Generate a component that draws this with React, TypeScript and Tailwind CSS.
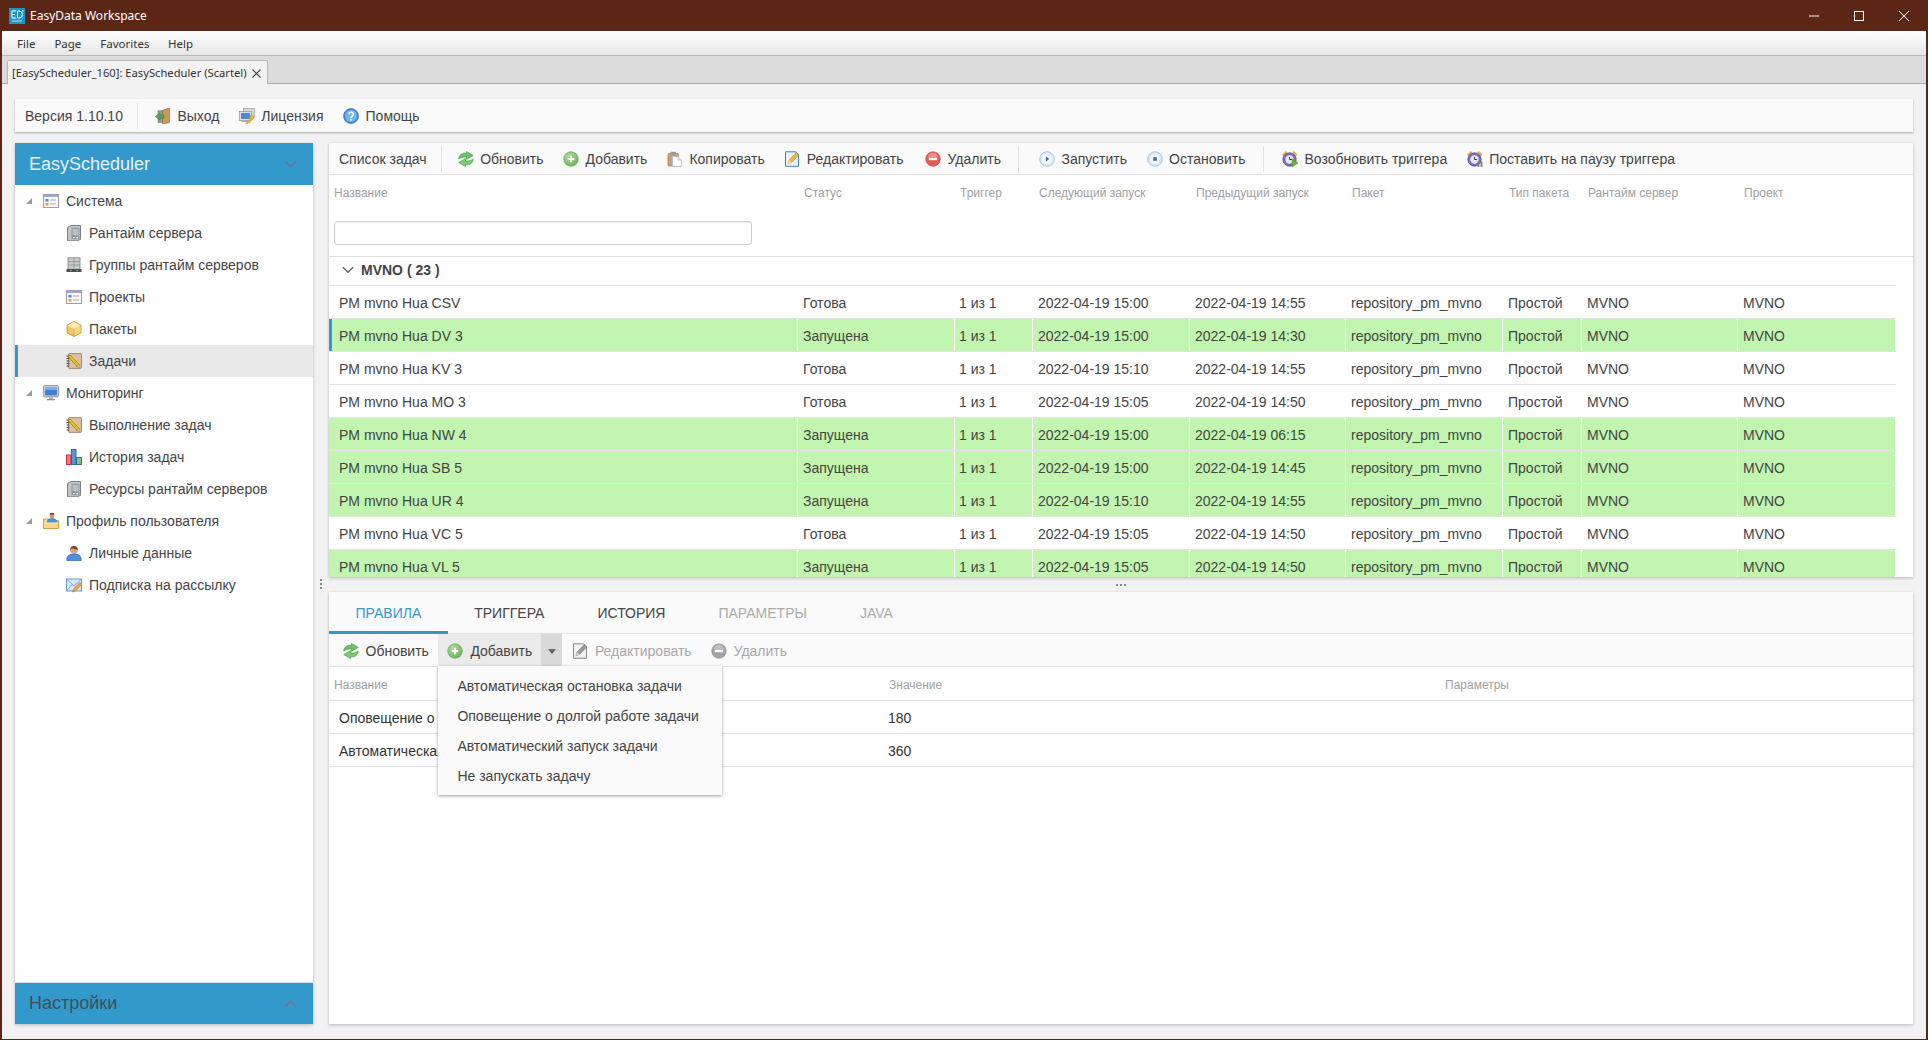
import type { ReactNode } from 'react';

function Svg({ size = 16, children }: { size?: number; children: ReactNode }) {
  return (
    <svg width={size} height={size} viewBox="0 0 16 16" className="shrink-0">
      {children}
    </svg>
  );
}

function Logo() {
  return (
    <svg width={16} height={16} viewBox="0 0 16 16" className="shrink-0">
      <rect width="16" height="16" fill="#1c97c4" />
      <path d="M3 3h4M3 3v7h4M3 6.500h3M8.500 3v7h1.500a3.500 3.500 0 0 0 0-7z" fill="none" stroke="#fff" strokeWidth="1" />
      <rect x="13" y="2" width="1.500" height="1.500" fill="#fff" />
      <rect x="3" y="12.500" width="10" height="1" fill="#bfe4f2" />
    </svg>
  );
}

const RefreshIcon = () => (
  <Svg>
    <path d="M.8 8C.8 4 4.500 1.500 8.500 2.300V.4l6.700 4-6.700 4V6C5.800 5.600 3.500 6.300.8 8z" fill="#6cc36a" stroke="#3a8f3f" strokeWidth=".6" />
    <path d="M15.200 8c0 4-3.700 6.500-7.700 5.700v1.900L.8 11.600l6.700-4V10c2.700.4 5-.3 7.700-2z" fill="#7ccc74" stroke="#3a8f3f" strokeWidth=".6" />
  </Svg>
);

const AddIcon = () => (
  <Svg>
    <defs>
      <radialGradient id="addg" cx=".4" cy=".35" r=".8">
        <stop offset="0" stopColor="#b6e29c" />
        <stop offset="1" stopColor="#5aa94c" />
      </radialGradient>
    </defs>
    <circle cx="8" cy="8" r="7.300" fill="url(#addg)" stroke="#6f9f68" strokeWidth=".6" />
    <path d="M8 4.800v6.400M4.800 8h6.400" stroke="#fff" strokeWidth="2" />
  </Svg>
);

const CopyIcon = () => (
  <Svg>
    <rect x="1" y="2.500" width="10.500" height="12.500" rx="1" fill="#c9a27c" stroke="#98774f" strokeWidth=".7" />
    <rect x="3.500" y=".8" width="5.500" height="3.200" rx=".6" fill="#9a9a9a" />
    <path d="M5.500 5.500H11l3.500 3.500v6.500h-9z" fill="#fbfbfb" stroke="#aeb4ba" strokeWidth=".7" />
    <path d="M11 5.500V9h3.500" fill="#e3e6e9" stroke="#aeb4ba" strokeWidth=".6" />
  </Svg>
);

const EditIcon = ({ gray = false }: { gray?: boolean }) => (
  <Svg>
    <path d="M1.500.8h10l3 2.500v12h-13z" fill={gray ? '#f1f1f1' : '#eaf3fb'} stroke={gray ? '#8a8a8a' : '#3d82c4'} strokeWidth="1" />
    <path d="M4 12.800l1-3.800L12 1.800l2.500 2.500-7 7.200z" fill={gray ? '#9c9c9c' : '#f0b13c'} stroke={gray ? '#6d6d6d' : '#b97d21'} strokeWidth=".5" />
    <path d="M4 12.800l1-3.800 2.500 2.500z" fill={gray ? '#d8d8d8' : '#f7dfb0'} />
  </Svg>
);

const DeleteIcon = ({ gray = false }: { gray?: boolean }) => (
  <Svg>
    <circle cx="8" cy="8" r="7.300" fill={gray ? '#a3a3a3' : '#e25b50'} stroke={gray ? '#909090' : '#c8473d'} strokeWidth=".6" />
    <path d="M3 6.500a5 5 0 0 1 10 0z" fill="#fff" fillOpacity=".3" />
    <rect x="3.800" y="6.800" width="8.400" height="2.400" fill="#fff" />
  </Svg>
);

const PlayIcon = () => (
  <Svg>
    <circle cx="8" cy="8" r="7.300" fill="#dbe7f6" stroke="#a3bfe0" strokeWidth=".9" />
    <circle cx="8" cy="8" r="4.800" fill="#f7fafd" />
    <path d="M6.800 5.300L10.300 8l-3.500 2.700z" fill="#3a6fb4" />
  </Svg>
);

const StopIcon = () => (
  <Svg>
    <circle cx="8" cy="8" r="7.300" fill="#dbe7f6" stroke="#a3bfe0" strokeWidth=".9" />
    <circle cx="8" cy="8" r="4.800" fill="#f7fafd" />
    <rect x="6.200" y="6.200" width="3.600" height="3.600" fill="#3a6fb4" />
  </Svg>
);

const ClockIcon = ({ pause = false }: { pause?: boolean }) => (
  <Svg>
    <path d="M.8 4.500L4.500.8M11 .8L14.700 4.500" stroke="#e0ae3a" strokeWidth="2.200" />
    <circle cx="7.500" cy="8.500" r="6.700" fill="#7d6fbe" stroke="#4f4490" strokeWidth=".7" />
    <circle cx="7.500" cy="8.500" r="4.200" fill="#e9e6f5" />
    <path d="M7.500 5.800v2.700H10" fill="none" stroke="#3a3a5a" strokeWidth="1" />
    {pause ? (
      <path d="M11.500 10.500v5.500M14.500 10.500v5.500" stroke="#7f7f7f" strokeWidth="1.800" />
    ) : (
      <path d="M10.200 7.800L16 12l-5.800 4z" fill="#68b82e" stroke="#4c8f1f" strokeWidth=".5" />
    )}
  </Svg>
);

const ExitIcon = () => (
  <Svg>
    <path d="M7.500 2.300L14.500 0v14.500l-7 1.500z" fill="#cd965a" stroke="#8f6230" strokeWidth=".6" />
    <rect x="3" y="2.800" width="4.500" height="11.700" fill="#9a9a8a" stroke="#6a6a5c" strokeWidth=".5" />
    <path d="M.5 8.500L5 4.800V7h4v3H5v2.200z" fill="#4fa84a" stroke="#2f7a2c" strokeWidth=".5" />
  </Svg>
);

const LicenseIcon = () => (
  <Svg>
    <rect x="4.500" y=".5" width="11" height="9" fill="#d4d6d9" stroke="#8e9298" strokeWidth=".6" />
    <rect x=".5" y="3.500" width="12" height="9" fill="#dde0e3" stroke="#80858c" strokeWidth=".6" />
    <rect x="2" y="5" width="9" height="6" fill="#4b89d6" />
    <rect x="2.500" y="12.500" width="8" height="1.500" fill="#a8abb0" />
    <circle cx="12.800" cy="9.500" r="2.200" fill="#edbb3c" stroke="#b98b1e" strokeWidth=".5" />
    <path d="M11.500 10.800L6.500 15.500h2.300l.8-.8.8.4 2.200-3.600z" fill="#edbb3c" stroke="#b98b1e" strokeWidth=".4" />
  </Svg>
);

const HelpIcon = () => (
  <Svg>
    <circle cx="8" cy="8" r="7.500" fill="#3f8fd6" stroke="#2a6fb3" strokeWidth=".6" />
    <circle cx="8" cy="8" r="5.900" fill="#76b4ea" />
    <path d="M5.900 6.300a2.200 2.200 0 1 1 3.300 1.900c-.8.500-1.200 1-1.200 1.900" fill="none" stroke="#fff" strokeWidth="1.500" />
    <rect x="7.200" y="11" width="1.600" height="1.600" fill="#fff" />
  </Svg>
);

const WindowIcon = () => (
  <Svg>
    <rect x=".5" y="1.500" width="15" height="13" fill="#f8f8fb" stroke="#9c9cb4" strokeWidth="1" />
    <rect x="1" y="2" width="14" height="2" fill="#a9a8c9" />
    <rect x="2.500" y="6" width="3" height="2.500" fill="#4b8ad0" />
    <rect x="2.500" y="10" width="3" height="2.500" fill="#e8a92f" />
    <path d="M7 7h6M7 11h6" stroke="#a8a8a8" strokeWidth="1" />
  </Svg>
);

const ServerIcon = () => (
  <Svg>
    <path d="M1.500 2.500L5 .5h9.500v14L11 15.800H1.500z" fill="#c2c5c8" stroke="#666a6e" strokeWidth=".8" />
    <rect x="5.500" y="2.800" width="8" height="11.500" fill="#989ca0" />
    <path d="M6.500 5h6M6.500 7h6M6.500 9h6" stroke="#ececec" strokeWidth=".9" />
    <rect x="7" y="12" width="1.500" height="1.300" fill="#fff" />
    <rect x="10.500" y="12" width="1.500" height="1.300" fill="#fff" />
  </Svg>
);

const ServerGroupIcon = () => (
  <Svg>
    <rect x="2" y=".8" width="12" height="11.500" fill="#c8cbce" stroke="#7d8185" strokeWidth=".8" />
    <path d="M8 1v11M2 4.500h12M2 8h12" stroke="#8e9296" strokeWidth=".8" />
    <rect x=".5" y="12" width="15" height="3" fill="#4c5054" />
    <rect x="4" y="13" width="1.500" height="1.200" fill="#51d651" />
    <rect x="10.500" y="13" width="1.500" height="1.200" fill="#51d651" />
  </Svg>
);

const PackageIcon = () => (
  <Svg>
    <path d="M8 .5l7 3.700v7.600l-7 3.700-7-3.700V4.200z" fill="#f4c561" stroke="#c48f2c" strokeWidth=".9" />
    <path d="M1.500 4.400L8 7.800l6.500-3.400L8 1z" fill="#fcebbb" />
    <path d="M8 7.800l6.500-3.400v7.100L8 15z" fill="#f7d68a" />
    <path d="M8 7.800V15" stroke="#d9a94a" strokeWidth=".8" />
  </Svg>
);

const TaskIcon = () => (
  <Svg>
    <rect x="2.500" y=".6" width="13" height="14.800" rx=".8" fill="#e0bf9f" stroke="#a08066" strokeWidth=".9" />
    <path d="M.5 3h3M.5 5.500h3M.5 8h3M.5 10.500h3M.5 13h3" stroke="#444" strokeWidth="1" />
    <path d="M3.500 1.800L13 11.300l-2 2L2.200 3.500z" fill="#f2c51d" stroke="#7b5c0c" strokeWidth=".6" />
    <path d="M13 11.300l1 3.200-3.200-1z" fill="#f1dcc2" stroke="#7b5c0c" strokeWidth=".4" />
  </Svg>
);

const MonitorIcon = () => (
  <Svg>
    <rect x=".6" y=".6" width="14.800" height="11.200" rx="1" fill="#dadcdf" stroke="#7f8489" strokeWidth=".9" />
    <rect x="2" y="2" width="12" height="8.500" fill="#3f80d4" />
    <path d="M2 2h12v3H2z" fill="#7db0ea" />
    <rect x="6" y="12" width="4" height="2" fill="#b4b7ba" />
    <rect x="4" y="14" width="8" height="1.300" fill="#8c9094" />
  </Svg>
);

const ChartIcon = () => (
  <Svg>
    <rect x=".5" y="6" width="4.500" height="9.500" fill="#f07a84" stroke="#b42c38" strokeWidth=".9" />
    <rect x="5.500" y=".5" width="4.500" height="15" fill="#5a92dc" stroke="#2a5ea8" strokeWidth=".9" />
    <rect x="10.500" y="8.500" width="5" height="7" fill="#7fc480" stroke="#2f5fa0" strokeWidth=".9" />
  </Svg>
);

const UserFolderIcon = () => (
  <Svg>
    <path d="M.5 6h5l1 1.500h9v8H.5z" fill="#f6d98b" stroke="#c8983a" strokeWidth=".9" />
    <circle cx="9" cy="2.800" r="2.400" fill="#d9986b" />
    <path d="M6.600 1.800a2.400 2.400 0 0 1 4.800 0z" fill="#7c4a28" />
    <path d="M4 9.500a5 4.300 0 0 1 10 0z" fill="#4f90dc" stroke="#2c68b0" strokeWidth=".5" />
    <path d="M1.500 10h13" stroke="#fff1c8" strokeWidth="1" />
  </Svg>
);

const UserIcon = () => (
  <Svg>
    <circle cx="8" cy="5" r="3.800" fill="#e0a47a" />
    <path d="M4.200 4.800a3.800 3.800 0 0 1 7.600 0C9.500 4.400 7 3.500 6 3.200c-.4.700-1 1.200-1.800 1.600z" fill="#7c4a28" />
    <path d="M.8 14.500c0-3.500 2.500-5.500 7.200-5.500s7.200 2 7.200 5.500v1H.8z" fill="#4f90dc" stroke="#2c68b0" strokeWidth=".7" />
  </Svg>
);

const MailIcon = () => (
  <Svg>
    <rect x=".5" y="2" width="15" height="12" fill="#d6e9fb" stroke="#5d93c9" strokeWidth=".9" />
    <path d="M1 2.500l7 6.500 7-6.500M1 13.500l5-6" fill="none" stroke="#6fa3d6" strokeWidth=".9" />
    <path d="M6.500 15l1-3 6.300-6.500 2 2-6.300 6.500z" fill="#f0a93c" stroke="#a8701c" strokeWidth=".5" />
  </Svg>
);

function Chevron({ up = false, className = '' }: { up?: boolean; className?: string }) {
  return (
    <svg width={13} height={8} viewBox="0 0 13 8" className={className}>
      <path d={up ? 'M1 7l5.500-5.500L12 7' : 'M1 1l5.500 5.500L12 1'} fill="none" stroke="currentColor" strokeWidth="1.600" />
    </svg>
  );
}

function Expander() {
  return (
    <svg width={8} height={8} viewBox="0 0 8 8" className="shrink-0">
      <path d="M7 1v6H1z" fill="#999" />
    </svg>
  );
}

function ToolButton({ icon, label, disabled = false, className = '' }: { icon: ReactNode; label: string; disabled?: boolean; className?: string }) {
  return (
    <div className={`flex items-center gap-[6.5px] pl-[10px] pr-[9.5px] ${disabled ? 'text-[#a8a8a8]' : 'text-[#444]'} ${className}`}>
      {icon}
      <span className="whitespace-nowrap pt-px">{label}</span>
    </div>
  );
}

function Separator({ className = '' }: { className?: string }) {
  return <div className={`h-[26px] w-px bg-[#e2e2e2] ${className}`} />;
}

type TreeNode = { label: string; icon: ReactNode; top?: boolean; selected?: boolean };

const tree: TreeNode[] = [
  { label: 'Система', icon: <WindowIcon />, top: true },
  { label: 'Рантайм сервера', icon: <ServerIcon /> },
  { label: 'Группы рантайм серверов', icon: <ServerGroupIcon /> },
  { label: 'Проекты', icon: <WindowIcon /> },
  { label: 'Пакеты', icon: <PackageIcon /> },
  { label: 'Задачи', icon: <TaskIcon />, selected: true },
  { label: 'Мониторинг', icon: <MonitorIcon />, top: true },
  { label: 'Выполнение задач', icon: <TaskIcon /> },
  { label: 'История задач', icon: <ChartIcon /> },
  { label: 'Ресурсы рантайм серверов', icon: <ServerIcon /> },
  { label: 'Профиль пользователя', icon: <UserFolderIcon />, top: true },
  { label: 'Личные данные', icon: <UserIcon /> },
  { label: 'Подписка на рассылку', icon: <MailIcon /> },
];

const columns = ['Название', 'Статус', 'Триггер', 'Следующий запуск', 'Предыдущий запуск', 'Пакет', 'Тип пакета', 'Рантайм сервер', 'Проект'];

const tasks = [
  { name: 'PM mvno Hua CSV', running: false, next: '15:00', prev: '14:55' },
  { name: 'PM mvno Hua DV 3', running: true, next: '15:00', prev: '14:30', selected: true },
  { name: 'PM mvno Hua KV 3', running: false, next: '15:10', prev: '14:55' },
  { name: 'PM mvno Hua MO 3', running: false, next: '15:05', prev: '14:50' },
  { name: 'PM mvno Hua NW 4', running: true, next: '15:00', prev: '06:15' },
  { name: 'PM mvno Hua SB 5', running: true, next: '15:00', prev: '14:45' },
  { name: 'PM mvno Hua UR 4', running: true, next: '15:10', prev: '14:55' },
  { name: 'PM mvno Hua VC 5', running: false, next: '15:05', prev: '14:50' },
  { name: 'PM mvno Hua VL 5', running: true, next: '15:05', prev: '14:50' },
];

const gridCols = 'grid grid-cols-[469px_157px_78px_157px_156px_157px_79px_156px_158px]';

function TaskRow({ task }: { task: (typeof tasks)[number] }) {
  const cells = [
    task.running ? 'Запущена' : 'Готова',
    '1 из 1',
    `2022-04-19 ${task.next}`,
    `2022-04-19 ${task.prev}`,
    'repository_pm_mvno',
    'Простой',
    'MVNO',
    'MVNO',
  ];
  return (
    <div className={`${gridCols} h-[33px] shrink-0 border-b border-[#e4e4e4] ${task.running ? 'bg-[#c1f5b0]' : 'bg-white'}`}>
      <div className={`flex items-center border-r border-white pt-[3px] ${task.selected ? 'border-l-[3px] border-l-[#3399cc] pl-[7px]' : 'pl-[10px]'}`}>
        {task.name}
      </div>
      {cells.map((value, i) => (
        <div key={i} className={`flex items-center border-r border-white pt-[3px] ${i === 1 ? 'pl-[4px]' : 'pl-[5px]'}`}>
          {value}
        </div>
      ))}
    </div>
  );
}

function Sidebar() {
  return (
    <aside className="flex w-[298px] shrink-0 flex-col bg-white shadow-[0_1px_3px_rgba(0,0,0,0.25)]">
      <div className="flex h-[42px] shrink-0 items-center justify-between bg-[#3399cc] pl-[14px] pr-[16px] text-[18px] text-[#e4f1f8]">
        EasyScheduler
        <Chevron className="text-[#587d94]" />
      </div>
      <div className="flex-1">
        {tree.map((node) => (
          <div
            key={node.label}
            className={`flex h-[32px] items-center ${node.selected ? 'border-l-[3px] border-[#3399cc] bg-[#e9e9e9]' : ''} ${node.top ? 'pl-[10px]' : node.selected ? 'pl-[48px]' : 'pl-[51px]'}`}
          >
            {node.top && (
              <span className="mr-[10px]">
                <Expander />
              </span>
            )}
            {node.icon}
            <span className="ml-[7px] whitespace-nowrap">{node.label}</span>
          </div>
        ))}
      </div>
      <div className="flex h-[42px] shrink-0 items-center justify-between border-t border-[#cfe3ee] bg-[#3399cc] pl-[14px] pr-[16px] text-[18px] text-[#3f4f57]">
        Настройки
        <Chevron up className="text-[#687b86]" />
      </div>
    </aside>
  );
}

function TasksPanel() {
  return (
    <section className="flex h-[434px] shrink-0 flex-col overflow-hidden bg-white shadow-[0_1px_3px_rgba(0,0,0,0.25)]">
      <div className="flex h-[32px] shrink-0 items-center border-b border-[#e2e2e2] bg-[#fafafa]">
        <span className="ml-[10px] mr-[14px] whitespace-nowrap pt-px text-[#444]">Список задач</span>
        <Separator className="mr-[6px]" />
        <ToolButton icon={<RefreshIcon />} label="Обновить" />
        <ToolButton icon={<AddIcon />} label="Добавить" />
        <ToolButton icon={<CopyIcon />} label="Копировать" />
        <ToolButton icon={<EditIcon />} label="Редактировать" />
        <ToolButton icon={<DeleteIcon />} label="Удалить" className="ml-[2px]" />
        <Separator className="ml-[8px] mr-[9.5px]" />
        <ToolButton icon={<PlayIcon />} label="Запустить" />
        <ToolButton icon={<StopIcon />} label="Остановить" />
        <Separator className="mx-[8px]" />
        <ToolButton icon={<ClockIcon />} label="Возобновить триггера" />
        <ToolButton icon={<ClockIcon pause />} label="Поставить на паузу триггера" />
      </div>
      <div className="h-[82px] shrink-0 border-b border-[#e2e2e2]">
        <div className={`${gridCols} h-[36px] text-[12px] text-[#a0a0a0]`}>
          {columns.map((column, i) => (
            <div key={column} className={`flex items-center ${i === 0 || i === 2 ? 'pl-[5px]' : 'pl-[6px]'}`}>
              {column}
            </div>
          ))}
        </div>
        <input className="ml-[5px] mt-[10px] h-[24px] w-[418px] rounded-[3px] border border-[#cfcfcf] shadow-[inset_0_1px_2px_rgba(0,0,0,0.08)] outline-none" />
      </div>
      <div className="w-[1567px]">
        <div className="flex h-[29px] items-center gap-[7px] border-b border-[#e4e4e4] pb-[2px] pl-[13px] font-bold text-[#444]">
          <Chevron className="w-[12px] text-[#666]" />
          MVNO ( 23 )
        </div>
        {tasks.map((task) => (
          <TaskRow key={task.name} task={task} />
        ))}
      </div>
    </section>
  );
}

const tabs = [
  { label: 'ПРАВИЛА', color: 'border-[#3399cc] text-[#3399cc]' },
  { label: 'ТРИГГЕРА', color: 'border-transparent text-[#444]' },
  { label: 'ИСТОРИЯ', color: 'border-transparent text-[#444]' },
  { label: 'ПАРАМЕТРЫ', color: 'border-transparent text-[#aaa]' },
  { label: 'JAVA', color: 'border-transparent text-[#aaa]' },
];

const addMenu = [
  'Автоматическая остановка задачи',
  'Оповещение о долгой работе задачи',
  'Автоматический запуск задачи',
  'Не запускать задачу',
];

const rules = [
  { name: 'Оповещение о долгой работе задачи', value: '180' },
  { name: 'Автоматическая остановка задачи', value: '360' },
];

function DetailsPanel() {
  return (
    <section className="flex min-h-0 flex-1 flex-col bg-white shadow-[0_1px_3px_rgba(0,0,0,0.25)]">
      <div className="flex h-[42px] shrink-0 border-b border-[#e2e2e2] bg-[#fafafa]">
        {tabs.map((tab) => (
          <div key={tab.label} className={`-mb-px flex items-center border-b-[3px] px-[26.5px] pt-[3px] ${tab.color}`}>
            {tab.label}
          </div>
        ))}
      </div>
      <div className="flex h-[33px] shrink-0 items-stretch border-b border-[#e2e2e2] bg-[#fafafa]">
        <div className="pl-[4px]" />
        <ToolButton icon={<RefreshIcon />} label="Обновить" className="pt-[2px]" />
        <div className="relative flex">
          <div className="flex h-full w-[103px] items-center gap-[7px] bg-[#ebebeb] pl-[9px] pt-[2px] text-[#444]">
            <AddIcon />
            <span className="pt-px">Добавить</span>
          </div>
          <div className="flex h-full w-[21px] items-center justify-center bg-[#d9d9d9] pt-[2px]">
            <svg width={8} height={5} viewBox="0 0 8 5">
              <path d="M0 0h8L4 5z" fill="#666" />
            </svg>
          </div>
          <div className="absolute left-0 top-full z-10 w-[284px] bg-[#fafafa] pb-[5px] pt-[4px] shadow-[0_1px_3px_rgba(0,0,0,0.4)]">
            {addMenu.map((item) => (
              <div key={item} className="flex h-[30px] items-center whitespace-nowrap pl-[19px] pt-[3px] text-[#444]">
                {item}
              </div>
            ))}
          </div>
        </div>
        <ToolButton icon={<EditIcon gray />} label="Редактировать" disabled className="pt-[2px]" />
        <ToolButton icon={<DeleteIcon gray />} label="Удалить" disabled className="pt-[2px]" />
      </div>
      <div className="grid h-[34px] shrink-0 grid-cols-[555px_557px_1fr] items-center border-b border-[#e2e2e2] pt-[3px] text-[12px] text-[#a0a0a0]">
        <div className="pl-[5px]">Название</div>
        <div className="pl-[5px]">Значение</div>
        <div className="pl-[4px]">Параметры</div>
      </div>
      {rules.map((rule) => (
        <div key={rule.name} className="grid h-[33px] shrink-0 grid-cols-[555px_557px_1fr] items-center border-b border-[#e2e2e2] pt-[3px] text-[#333]">
          <div className="w-[110px] overflow-hidden whitespace-nowrap pl-[10px]">{rule.name}</div>
          <div className="pl-[4px]">{rule.value}</div>
          <div />
        </div>
      ))}
    </section>
  );
}

export default function App() {
  return (
    <div className="flex h-[1040px] w-[1928px] flex-col overflow-hidden border-x-2 border-b border-[#5c2616] bg-[#f2f2f2] font-['Liberation_Sans',Arial,sans-serif] text-[14px] text-[#444]">
      <header className="-mx-[2px] flex h-[31px] shrink-0 items-center bg-[#5c2616] font-['Noto_Sans',sans-serif] text-[12px] text-white">
        <div className="ml-[9px] mr-[5px]">
          <Logo />
        </div>
        <span>EasyData Workspace</span>
        <div className="ml-auto flex items-center gap-[35px] pr-[19px]">
          <svg width={10} height={10} viewBox="0 0 10 10">
            <path d="M0 5h10" stroke="#fff" />
          </svg>
          <svg width={10} height={10} viewBox="0 0 10 10">
            <rect x=".5" y=".5" width="9" height="9" fill="none" stroke="#fff" />
          </svg>
          <svg width={10} height={10} viewBox="0 0 10 10">
            <path d="M0 0l10 10M10 0L0 10" stroke="#fff" />
          </svg>
        </div>
      </header>

      <nav className="flex h-[24px] shrink-0 items-center bg-gradient-to-b from-white to-[#e6e6e6] pl-[15px] pt-px font-['Noto_Sans',sans-serif] text-[11.5px] text-[#333]">
        <span className="mr-[19px]">File</span>
        <span className="mr-[19px]">Page</span>
        <span className="mr-[18.5px]">Favorites</span>
        <span>Help</span>
      </nav>

      <div className="flex h-[29px] shrink-0 items-end border-y border-t-[#b8b8b8] border-b-[#aaa] bg-[#dcdcdc] pl-[5px] font-['Noto_Sans',sans-serif] text-[11.2px] text-[#333]">
        <div className="-mb-px flex h-[24px] w-[261px] items-center gap-[5px] rounded-t-[2px] border border-b-0 border-[#b5b5b5] bg-[#f2f2f2] pl-[4px] pt-px">
          <span className="whitespace-nowrap">[EasyScheduler_160]: EasyScheduler (Scartel)</span>
          <svg width={9} height={9} viewBox="0 0 9 9" className="shrink-0">
            <path d="M.5.5l8 8M8.500.5l-8 8" stroke="#444" strokeWidth="1.100" />
          </svg>
        </div>
      </div>

      <main className="flex min-h-0 flex-1 flex-col gap-[11px] pb-[15px] pl-[13px] pr-[13px] pt-[15px]">
        <div className="flex h-[33px] shrink-0 items-center bg-[#fafafa] shadow-[0_1px_2px_rgba(0,0,0,0.3)]">
          <span className="ml-[10px] mr-[14px] whitespace-nowrap pt-px">Версия 1.10.10</span>
          <Separator className="mr-[7px]" />
          <ToolButton icon={<ExitIcon />} label="Выход" />
          <ToolButton icon={<LicenseIcon />} label="Лицензия" />
          <ToolButton icon={<HelpIcon />} label="Помощь" />
        </div>
        <div className="flex min-h-0 flex-1">
          <Sidebar />
          <div className="flex w-[16px] shrink-0 flex-col items-center justify-center gap-[2px]">
            <span className="h-[2px] w-[2px] bg-[#888]" />
            <span className="h-[2px] w-[2px] bg-[#888]" />
            <span className="h-[2px] w-[2px] bg-[#888]" />
          </div>
          <div className="flex min-w-0 flex-1 flex-col">
            <TasksPanel />
            <div className="flex h-[15px] shrink-0 items-center justify-center gap-[2px]">
              <span className="h-[2px] w-[2px] bg-[#888]" />
              <span className="h-[2px] w-[2px] bg-[#888]" />
              <span className="h-[2px] w-[2px] bg-[#888]" />
            </div>
            <DetailsPanel />
          </div>
        </div>
      </main>
    </div>
  );
}
